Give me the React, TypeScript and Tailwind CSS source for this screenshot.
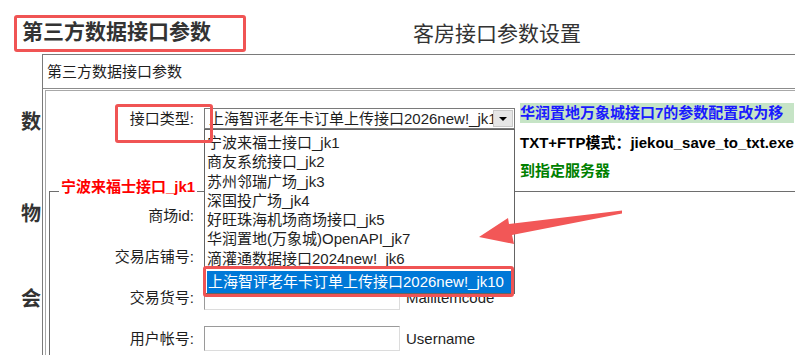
const options = [
  '宁波来福士接口_jk1',
  '商友系统接口_jk2',
  '苏州邻瑞广场_jk3',
  '深国投广场_jk4',
  '好旺珠海机场商场接口_jk5',
  '华润置地(万象城)OpenAPI_jk7',
  '滴灌通数据接口2024new!_jk6',
];

const current = '上海智评老年卡订单上传接口2026new!_jk10';

const fields = [
  { label: '商场id:', note: 'Mallid' },
  { label: '交易店铺号:', note: 'Storecode' },
  { label: '交易货号:', note: 'Mallitemcode' },
  { label: '用户帐号:', note: 'Username' },
];

export default function App() {
  return (
    <div className="relative w-[795px] h-[355px] overflow-hidden bg-white text-[#1e1e1e] font-['Liberation_Sans','Noto_Sans_CJK_SC',sans-serif]">
      {/* page header */}
      <div className="flex h-[54px]">
        <div className="w-[413px] shrink-0 pl-[22px] pt-[19px] text-[21px] leading-[26px] font-bold text-[#333]">
          第三方数据接口参数
        </div>
        <div className="pt-[21px] text-[21px] leading-[26px] text-[#333]">客房接口参数设置</div>
      </div>

      <div className="flex h-[301px]">
        {/* labels of the page behind the panel */}
        <div className="w-[42px] shrink-0 flex flex-col pl-[21px] pt-[56px] text-[20px] leading-[24px] font-bold text-[#333]">
          <span>数</span>
          <span className="mt-[68px]">物</span>
          <span className="mt-[61px]">会</span>
        </div>

        {/* panel */}
        <div className="flex-1 min-w-0 border-l border-t border-[#7a7a7a]">
          <div className="h-[33px] pl-[4px] pt-[7px] text-[15px] leading-[20px]">第三方数据接口参数</div>
          <div className="h-full border-t border-[#8c8c8c]">
            <div className="h-full ml-[2px] mt-[1px] border-l border-t border-[#a8a8a8]">
              {/* interface type row */}
              <div className="flex items-start pt-[12px]">
                <div className="w-[148px] shrink-0 mt-[5px] text-right text-[15px] leading-[21px]">接口类型:</div>
                <div className="ml-[10px] mt-[5px] w-[311px] h-[21px] shrink-0 flex items-center border border-[#7a7a7a] bg-white">
                  <span className="flex-1 overflow-hidden whitespace-nowrap pl-[4px] pr-[3px] text-[15px] leading-[19px]">
                    {current}
                  </span>
                  <span className="w-[20px] h-[17px] mr-[1px] flex items-center justify-center bg-[#e6e6e6] border border-[#c8c8c8]">
                    <span className="w-0 h-0 border-l-[4px] border-r-[4px] border-t-[4px] border-l-transparent border-r-transparent border-t-black" />
                  </span>
                </div>
                <div className="ml-[5px] min-w-0 whitespace-nowrap text-[15px] font-bold leading-[20px]">
                  <div className="bg-[#c6e4c6] text-[#1a1aff]">华润置地万象城接口7的参数配置改为移</div>
                  <div className="mt-[10px] text-black">TXT+FTP模式：jiekou_save_to_txt.exe</div>
                  <div className="mt-[8px] text-[#008000]">到指定服务器</div>
                </div>
              </div>

              {/* group box */}
              <div className="relative mt-[10px] ml-[3px] h-full border-l border-t border-[#6e6e6e] pt-[11px]">
                <span className="absolute left-[9px] top-[-15px] bg-white px-[2px] text-[15px] font-bold leading-[20px] text-[#ff0000]">
                  宁波来福士接口_jk1
                </span>
                <div className="flex flex-col gap-[16px]">
                  {fields.map((f) => (
                    <div key={f.label} className="flex items-center h-[25px]">
                      <div className="w-[144px] shrink-0 text-right text-[15px] leading-[20px]">{f.label}</div>
                      <div className="ml-[10px] w-[196px] h-[25px] shrink-0 border border-t-[#9a9a9a] border-l-[#9a9a9a] border-b-[#dcdcdc] border-r-[#dcdcdc] bg-white" />
                      <div className="ml-[6px] text-[15px] leading-[20px]">{f.note}</div>
                    </div>
                  ))}
                </div>
              </div>
            </div>
          </div>
        </div>
      </div>

      {/* open dropdown list */}
      <div className="absolute z-10 left-[204px] top-[129px] w-[311px] h-[165px] overflow-hidden border border-[#646464] bg-white pt-[3px] text-[15px]">
        {options.map((o) => (
          <div key={o} className="h-[19.3px] pl-[2px] leading-[19.3px] whitespace-nowrap">
            {o}
          </div>
        ))}
        <div className="mt-[3px] mx-[2px] h-[22px] pl-[1px] leading-[22px] whitespace-nowrap bg-[#0078d7] text-white">
          {current}
        </div>
      </div>

      {/* annotations */}
      <div className="absolute z-20 left-[14px] top-[15px] w-[232px] h-[37px] rounded-[3px] border-[3px] border-[#f05454]" />
      <div className="absolute z-20 left-[115px] top-[104px] w-[98px] h-[39px] rounded-[3px] border-[3px] border-[#f05454]" />
      <div className="absolute z-20 left-[203px] top-[266px] w-[311px] h-[31px] rounded-[3px] border-[3px] border-[#f05454]" />
      <svg className="absolute z-20 left-0 top-0" width="795" height="355" viewBox="0 0 795 355">
        <polygon points="479,237 508,218 509,224 622,210.5 622,213.5 512,235 514,244" fill="#f25757" />
      </svg>
    </div>
  );
}
